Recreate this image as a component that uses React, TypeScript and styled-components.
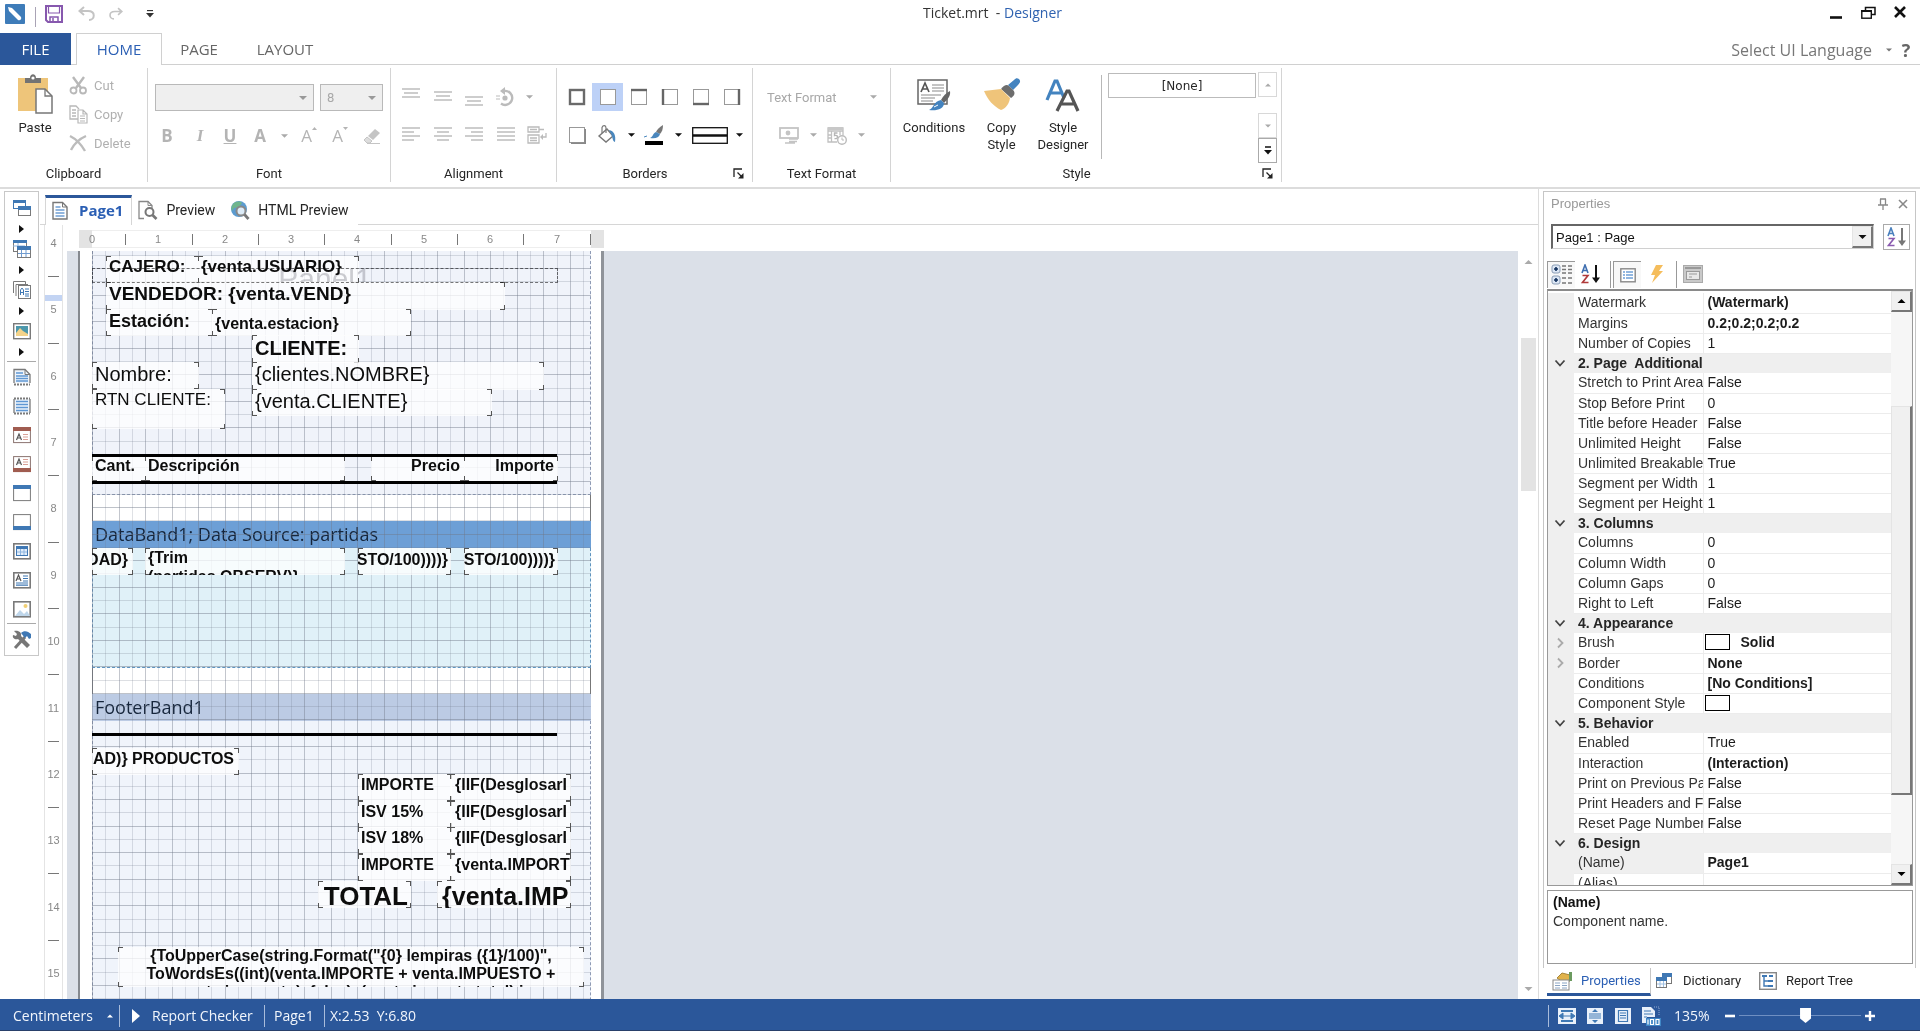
import React from "react";
import styled, { createGlobalStyle, css } from "styled-components";

const UI = `Roboto, "Open Sans", sans-serif`;
const SEGOE = `"Open Sans", "Noto Sans", sans-serif`;
const ARIAL = `"Liberation Sans", Arial, sans-serif`;
const BLUE = "#2b579a";

const Global = createGlobalStyle`
  * { box-sizing: border-box; }
  html, body { margin: 0; padding: 0; background: #fff; }
  body { font-family: ${UI}; font-size: 13px; color: #262626; overflow: hidden; }
  button, input, select { font: inherit; color: inherit; margin: 0; }
  h1, h2, p { margin: 0; font-weight: 400; }
`;

/* ---------- shell ---------- */
const App_ = styled.div`
  display: flex;
  flex-direction: column;
  height: 100vh;
`;
const PlainButton = styled.button`
  display: inline-flex;
  align-items: center;
  justify-content: center;
  border: 0;
  padding: 0;
  background: transparent;
`;

/* ---------- title bar ---------- */
const TitleBar = styled.header`
  display: grid;
  grid-template-columns: 1fr auto 1fr;
  height: 33px;
  padding: 0 4px 0 5px;
  font-family: ${SEGOE};
  font-size: 14px;
`;
const QuickAccess = styled.div`
  display: flex;
  align-items: center;
  height: 28px;
`;
const QuickRule = styled.span`
  width: 1px;
  height: 20px;
  margin: 6px 9px 0 10px;
  background: #a9a3b5;
`;
const QuickButton = styled(PlainButton)<{ $w: number }>`
  width: ${(p) => p.$w}px;
  height: 24px;
`;
const WindowTitle = styled.h1`
  padding-left: 64px;
  font-size: 14px;
  line-height: 25px;
  white-space: pre;
  color: #333;
  span { color: #2f62b0; }
`;
const WindowButtons = styled.div`
  display: flex;
  justify-content: flex-end;
  height: 24px;
`;
const WindowButton = styled(PlainButton)`
  width: 32px;
  height: 24px;
`;

/* ---------- ribbon tabs ---------- */
const TabRow = styled.nav`
  display: flex;
  height: 32px;
  border-bottom: 1px solid #d0d0d0;
  font-family: ${SEGOE};
  font-size: 15px;
`;
const FileTab = styled(PlainButton)`
  width: 71px;
  height: 32px;
  margin-right: 5px;
  background: ${BLUE};
  color: #fff;
`;
const RibbonTab = styled(PlainButton)<{ $on?: boolean; $w: number }>`
  width: ${(p) => p.$w}px;
  height: 32px;
  padding-bottom: 2px;
  color: ${(p) => (p.$on ? "#2b5fb4" : "#666")};
  border: 1px solid ${(p) => (p.$on ? "#d0d0d0" : "transparent")};
  border-bottom: 0;
  background: ${(p) => (p.$on ? "#fff" : "transparent")};
`;
const Language = styled(PlainButton)`
  margin-left: auto;
  gap: 14px;
  padding-bottom: 2px;
  font-size: 16px;
  color: #777;
  height: 35px;
`;
const Help = styled(PlainButton)`
  width: 28px;
  height: 35px;
  padding: 0 0 2px 0;
  font: 700 18px ${SEGOE};
  color: #666;
`;

/* ---------- ribbon ---------- */
const Ribbon = styled.section`
  display: flex;
  flex: none;
  height: 124px;
  padding-top: 3px;
  border-bottom: 2px solid #dcdcdc;
`;
const GroupBox = styled.div<{ $w: number }>`
  display: flex;
  flex-direction: column;
  width: ${(p) => p.$w}px;
  height: 114px;
  border-right: 1px solid #d4d4d4;
`;
const GroupBody = styled.div<{ $pad?: string; $row?: boolean }>`
  display: flex;
  flex-direction: ${(p) => (p.$row ? "row" : "column")};
  height: 97px;
  padding: ${(p) => p.$pad || "0"};
`;
const GroupFoot = styled.div<{ $launch?: boolean }>`
  display: grid;
  grid-template-columns: ${(p) => (p.$launch ? "2px 1fr 21px" : "1fr")};
  height: 17px;
  line-height: 17px;
  text-align: center;
`;
const Launcher = styled(PlainButton)`
  width: 14px;
  height: 16px;
`;
const Strip = styled.div<{ $h: number; $left?: number }>`
  display: flex;
  align-items: center;
  height: ${(p) => p.$h}px;
  padding-left: ${(p) => p.$left || 0}px;
`;
const IconButton = styled(PlainButton)<{ $w: number; $on?: boolean; $dim?: boolean }>`
  width: ${(p) => p.$w}px;
  height: 28px;
  flex: none;
  color: ${(p) => (p.$dim ? "#b4b4b4" : "#111")};
  background: ${(p) => (p.$on ? "#bdd1f7" : "transparent")};
`;
const Glyph = styled.span<{ $b?: boolean; $i?: boolean; $u?: boolean }>`
  font-family: ${SEGOE};
  font-size: 17px;
  line-height: 22px;
  font-weight: ${(p) => (p.$b ? 700 : 400)};
  font-style: ${(p) => (p.$i ? "italic" : "normal")};
  text-decoration: ${(p) => (p.$u ? "underline" : "none")};
  ${(p) => p.$i && `font-family: "Liberation Serif", serif; font-weight: 700;`}
`;
const BigButton = styled(PlainButton)<{ $w: number; $top: number }>`
  flex-direction: column;
  justify-content: flex-start;
  width: ${(p) => p.$w}px;
  height: 94px;
  padding-top: ${(p) => p.$top}px;
  line-height: 17px;
  svg { flex: none; margin-bottom: 5px; }
`;
const ClipColumn = styled.div`
  display: flex;
  flex-direction: column;
  padding-left: 13px;
`;
const ClipButton = styled(PlainButton)`
  justify-content: flex-start;
  gap: 6px;
  height: 29px;
  color: #b0b0b0;
`;
const SelectBox = styled.label<{ $w: number }>`
  display: flex;
  align-items: center;
  width: ${(p) => p.$w}px;
  height: 27px;
  margin-right: 6px;
  padding-right: 6px;
  border: 1px solid #b9b9b9;
  background: #efefef;
  color: #a8a8a8;
  select {
    flex: 1;
    min-width: 0;
    height: 100%;
    padding: 0 6px;
    border: 0;
    background: transparent;
    appearance: none;
    color: #a8a8a8;
    opacity: 1;
  }
`;
const FormatSelect = styled(SelectBox)`
  border-color: transparent;
  background: transparent;
`;
const StyleRule = styled.span`
  width: 1px;
  height: 84px;
  margin: 7px 6px 0 1px;
  background: #b8b8b8;
`;
const StyleList = styled.div`
  width: 148px;
  padding-top: 5px;
`;
const StyleItem = styled(PlainButton)`
  width: 148px;
  height: 25px;
  border: 1px solid #bbb;
  font-family: "DejaVu Sans", sans-serif;
  font-size: 12px;
`;
const StyleScroll = styled.div`
  display: flex;
  flex-direction: column;
  width: 19px;
  height: 95px;
  padding-top: 4px;
  margin-left: 2px;
`;
const StyleStep = styled(PlainButton)<{ $dark?: boolean; $push?: boolean }>`
  height: 25px;
  margin-top: ${(p) => (p.$push ? "auto" : "0")};
  border: 1px solid ${(p) => (p.$dark ? "#aaa" : "#d8d8d8")};
`;

/* ---------- workspace ---------- */
const Work = styled.main`
  display: flex;
  flex: 1;
  min-height: 0;
`;
const ToolBox = styled.aside`
  display: flex;
  flex-direction: column;
  align-self: flex-start;
  align-items: center;
  width: 35px;
  height: 465px;
  margin: 2px 1px 0 4px;
  padding-top: 5px;
  border: 1px solid #c8c8c8;
`;
const ToolButton = styled(PlainButton)<{ $h: number }>`
  width: 30px;
  height: ${(p) => p.$h}px;
  flex: none;
`;
const ToolRule = styled.span`
  width: 29px;
  height: 1px;
  flex: none;
  background: #aaa;
`;
const Document = styled.section`
  display: flex;
  flex-direction: column;
  flex: 1;
  min-width: 0;
  margin-right: 4px;
  border-right: 1px solid #dcdcdc;
`;
const DocTabs = styled.div`
  display: flex;
  flex: none;
  height: 36px;
  padding: 6px 0 0 5px;
  border-bottom: 1px solid #d6d6d6;
`;
const DocTab = styled(PlainButton)<{ $on?: boolean; $gap: number }>`
  height: 30px;
  padding: ${(p) => (p.$on ? "0 8px 3px 6px" : "2px 9px 3px 6px")};
  gap: ${(p) => p.$gap}px;
  font: ${(p) => (p.$on ? `700 15px ${SEGOE}` : `400 14px ${UI}`)};
  color: ${(p) => (p.$on ? "#2b5fb4" : "#262626")};
  background: #fff;
  ${(p) => p.$on && `border-top: 3px solid ${BLUE}; border-right: 1px solid #d6d6d6; border-left: 1px solid #d6d6d6;`}
`;
const Surface = styled.div`
  display: flex;
  flex: 1;
  min-height: 0;
`;
const VRuler = styled.div`
  position: relative;
  width: 19px;
  margin: 0 4px 0 4px;
  border-left: 1px solid #e4e4e4;
  border-right: 1px solid #e4e4e4;
  overflow: hidden;
`;
const VMark = styled.span<{ $y: number }>`
  position: absolute;
  top: ${(p) => p.$y - 8}px;
  left: 0;
  width: 17px;
  text-align: center;
  font: 11px/14px ${ARIAL};
  color: #888;
`;
const VTick = styled.span<{ $y: number }>`
  position: absolute;
  top: ${(p) => p.$y - 1}px;
  left: 3px;
  width: 11px;
  height: 1px;
  background: #777;
`;
const VCursor = styled.span`
  position: absolute;
  top: 70px;
  left: 0;
  width: 17px;
  height: 6px;
  background: #c3d4f3;
`;
const Stage = styled.div`
  display: flex;
  flex-direction: column;
  flex: 1;
  min-width: 0;
`;
const HRuler = styled.div`
  position: relative;
  flex: none;
  height: 18px;
  width: 525px;
  margin: 5px 0 3px 12px;
  border: 0 solid #e3e3e3;
  border-width: 0 13px;
  box-shadow: inset 0 1px #eee, inset 0 -1px #eee;
`;
const HMark = styled.span<{ $x: number }>`
  position: absolute;
  left: ${(p) => p.$x - 10}px;
  top: 2px;
  width: 20px;
  text-align: center;
  font: 11px/14px ${ARIAL};
  color: #888;
`;
const HTick = styled.span<{ $x: number }>`
  position: absolute;
  left: ${(p) => p.$x}px;
  top: 4px;
  width: 1px;
  height: 11px;
  background: #777;
`;
const Canvas = styled.div`
  flex: 1;
  min-height: 0;
  overflow: hidden;
  background: #dbe0e8;
`;
const Sheet = styled.div`
  width: 526px;
  height: 1200px;
  margin-left: 11px;
  padding-left: 12px;
  border-left: 2px solid #85898f;
  border-right: 3px solid #8f9399;
  background: #fff;
`;
const Bands = styled.div`
  position: relative;
  width: 499px;
`;
const BandBody = styled.div<{ $h: number; $bg: string; $line: string }>`
  height: ${(p) => p.$h}px;
  background: ${(p) => p.$bg};
  border: 1px dashed ${(p) => p.$line};
  border-top: 0;
`;
const BandTitle = styled.h2<{ $bg: string }>`
  height: 27px;
  padding-left: 3px;
  font: 18px/26px ${SEGOE};
  color: #16263c;
  background: ${(p) => p.$bg};
`;
const BandGap = styled.div`
  height: 26px;
  border: solid #777;
  border-width: 0 1px;
`;
const GridLayer = styled.svg`
  position: absolute;
  inset: 0;
  pointer-events: none;
`;
const corners = css`
  --c: linear-gradient(#555, #555);
  background-image: var(--c), var(--c), var(--c), var(--c), var(--c), var(--c), var(--c), var(--c);
  background-repeat: no-repeat;
  background-size: 5px 1px, 1px 5px, 5px 1px, 1px 5px, 5px 1px, 1px 5px, 5px 1px, 1px 5px;
  background-position: 0 0, 0 0, 100% 0, 100% 0, 0 100%, 0 100%, 100% 100%, 100% 100%;
`;
type FieldProps = { $x: number; $y: number; $w: number; $h: number; $s: number; $b?: boolean; $a?: string; $t?: number; $side: number };
const Field = styled.div<FieldProps>`
  position: absolute;
  left: ${(p) => p.$x}px;
  top: ${(p) => p.$y}px;
  width: ${(p) => p.$w}px;
  height: ${(p) => p.$h}px;
  padding: ${(p) => p.$t ?? 0}px ${(p) => p.$side}px 0;
  display: flex;
  justify-content: ${(p) => p.$a || "flex-start"};
  overflow: hidden;
  white-space: pre;
  text-align: ${(p) => (p.$a === "center" ? "center" : "left")};
  font-family: ${ARIAL};
  font-size: ${(p) => p.$s}px;
  line-height: ${(p) => (p.$s > 17 ? 24 : p.$a === "center" ? 18 : 19)}px;
  font-weight: ${(p) => (p.$b ? 700 : 400)};
  color: #0d0d0d;
  background-color: rgba(255, 255, 255, 0.75);
  ${corners}
`;
const Rule = styled.div<{ $y: number }>`
  position: absolute;
  left: 0;
  top: ${(p) => p.$y}px;
  width: 465px;
  height: 3px;
  background: #000;
`;
const Panel = styled.div`
  position: absolute;
  left: 0;
  top: 17px;
  width: 466px;
  height: 15px;
  overflow: hidden;
  border: 1px dashed #777;
  mix-blend-mode: multiply;
  font: 30px/20px ${ARIAL};
  text-align: center;
  color: #cfcfd2;
`;
const ScrollTrack = styled.div`
  display: flex;
  flex-direction: column;
  align-items: center;
  width: 20px;
  padding: 35px 0 8px;
`;
const ScrollThumb = styled.div`
  width: 15px;
  height: 153px;
  margin: 74px 0 auto;
  background: #e3e3e3;
`;

/* ---------- properties ---------- */
const Side = styled.aside`
  display: flex;
  flex-direction: column;
  width: 373px;
  margin: 2px 4px 0 0;
`;
const SideFrame = styled.div`
  display: flex;
  flex-direction: column;
  flex: 1;
  min-height: 0;
  padding: 0 2px 4px 3px;
  border: 1px solid #c6c6c6;
  border-bottom: 0;
  font-family: ${ARIAL};
`;
const SideHead = styled.div`
  display: flex;
  align-items: center;
  height: 23px;
  padding: 0 0 0 4px;
  color: #999;
  h2 { flex: 1; font-size: 13px; }
`;
const HeadButton = styled(PlainButton)`
  width: 20px;
  height: 22px;
`;
const PickRow = styled.div`
  display: flex;
  justify-content: space-between;
  margin: 9px 3px 0 4px;
`;
const PickBox = styled.label`
  display: flex;
  width: 323px;
  height: 25px;
  border: 1px solid #d0d0d0;
  border-top: 2px solid #666;
  border-left: 2px solid #666;
  select {
    flex: 1;
    border: 0;
    padding: 0 3px;
    background: #fff;
    appearance: none;
    color: #111;
  }
`;
const bevel = css`
  border: 1px solid #e4e4e4;
  border-right: 2px solid #777;
  border-bottom: 2px solid #777;
  background: #f0f0f0;
`;
const PickArrow = styled.span`
  display: flex;
  align-items: center;
  justify-content: center;
  width: 21px;
  ${bevel}
`;
const SortButton = styled(PlainButton)`
  width: 27px;
  height: 26px;
  border: 1px solid #aaa;
`;
const GridTools = styled.div`
  display: flex;
  align-items: center;
  height: 30px;
  margin: 9px 0 0 0;
`;
const GridTool = styled(PlainButton)<{ $on?: boolean }>`
  width: 28px;
  height: 27px;
  margin-right: 2px;
  ${(p) => p.$on && `border-top: 1px solid #999; border-left: 1px solid #999; background: #f8f8f8;`}
`;
const GridToolRule = styled.span`
  width: 1px;
  height: 27px;
  margin: 0 2px 0 3px;
  background: #999;
`;
const GridFrame = styled.div`
  display: flex;
  flex: 1;
  min-height: 0;
  overflow: hidden;
  border: 1px solid #999;
  border-top: 2px solid #8a8a8a;
`;
const GridView = styled.div`
  flex: 1;
  height: 100%;
  padding-top: 2px;
  overflow: hidden;
`;
const PropTable = styled.table`
  width: 100%;
  table-layout: fixed;
  border-collapse: collapse;
  font-size: 14px;
  td, th {
    height: 20px;
    padding: 0;
    line-height: 19px;
    white-space: pre;
    overflow: hidden;
    text-align: left;
    font-weight: 400;
  }
`;
const Gutter = styled.td`
  background: #efefef;
  svg { display: block; margin: 0 0 0 6px; }
`;
const NameCell = styled.th<{ $sel?: boolean }>`
  && { padding-left: 4px; }
  color: #333;
  border-bottom: 1px solid #ececec;
  border-right: 1px solid #ececec;
  background: ${(p) => (p.$sel ? "#efefef" : "#fff")};
`;
const ValueCell = styled.td<{ $b?: boolean }>`
  && { padding-left: 4px; font-weight: ${(p) => (p.$b ? 700 : 400)}; }
  color: #1c1c1c;
  border-bottom: 1px solid #ececec;
`;
const SectionCell = styled.th`
  && { padding-left: 4px; font-weight: 700; }
  background: #efefef;
`;
const Swatch = styled.span`
  display: inline-block;
  width: 25px;
  height: 16px;
  margin: 1px 11px 0 -3px;
  vertical-align: top;
  border: 1px solid #000;
  background: #fff;
`;
const GridScroll = styled.div`
  display: flex;
  flex-direction: column;
  width: 21px;
  background: #f6f6f6;
`;
const BevelButton = styled(PlainButton)`
  height: 21px;
  flex: none;
  ${bevel}
`;
const BevelThumb = styled.div`
  height: 389px;
  margin: 94px 0 auto;
  flex: none;
  ${bevel}
`;
const HelpBox = styled.div`
  height: 74px;
  margin-top: 4px;
  padding: 2px 5px;
  border: 1px solid #999;
  font-size: 14px;
  line-height: 19px;
  color: #333;
  b { color: #111; }
`;
const SideTabs = styled.div`
  display: flex;
  height: 31px;
  padding: 0 0 3px 4px;
`;
const SideTab = styled(PlainButton)<{ $on?: boolean; $w: number }>`
  width: ${(p) => p.$w}px;
  height: 28px;
  padding-left: 5px;
  gap: 9px;
  justify-content: flex-start;
  color: ${(p) => (p.$on ? "#2b5fb4" : "#262626")};
  border-bottom: 3px solid ${(p) => (p.$on ? BLUE : "transparent")};
  border-right: 1px solid ${(p) => (p.$on ? "#c6c6c6" : "transparent")};
`;

/* ---------- status bar ---------- */
const Status = styled.footer`
  display: flex;
  align-items: center;
  flex: none;
  height: 32px;
  padding: 2px 0 0 13px;
  background: ${BLUE};
  border-bottom: 1px solid #29406a;
  color: #f2f6fc;
  font: 14px ${SEGOE};
`;
const StatusButton = styled(PlainButton)<{ $w: number; $gap?: number }>`
  width: ${(p) => p.$w}px;
  height: 28px;
  gap: ${(p) => p.$gap || 0}px;
  justify-content: flex-start;
`;
const StatusText = styled.span<{ $w: number }>`
  width: ${(p) => p.$w}px;
  white-space: pre;
`;
const StatusRule = styled.span<{ $gap: number }>`
  width: 1px;
  height: 22px;
  margin-right: ${(p) => p.$gap}px;
  background: #a9bcdb;
`;
const ZoomArea = styled.div`
  display: flex;
  align-items: center;
  width: 372px;
  margin-left: auto;
`;
const ZoomSlider = styled.input`
  width: 122px;
  height: 18px;
  margin: 0 3px;
  appearance: none;
  background: linear-gradient(#6f8fc2, #6f8fc2) center / 100% 1px no-repeat;
  &::-webkit-slider-thumb {
    appearance: none;
    width: 11px;
    height: 15px;
    border-radius: 0;
    background: #fff;
    clip-path: polygon(0 0, 100% 0, 100% 70%, 50% 100%, 0 70%);
  }
`;

/* ---------- icons ---------- */
const Svg = ({ w = 18, h = 18, vb, children }: { w?: number; h?: number; vb?: string; children: React.ReactNode }) => (
  <svg width={w} height={h} viewBox={vb || `0 0 ${w} ${h}`} fill="none" aria-hidden="true">{children}</svg>
);
const Down = ({ c = "#111", w = 7 }: { c?: string; w?: number }) => (
  <Svg w={w} h={4} vb="0 0 8 4"><path d="M0 0h8l-4 4z" fill={c} /></Svg>
);
const Up = ({ c = "#fff", w = 7 }: { c?: string; w?: number }) => (
  <Svg w={w} h={4} vb="0 0 8 4"><path d="M0 4h8l-4-4z" fill={c} /></Svg>
);
const Right = () => <Svg w={5} h={8}><path d="M0 0v8l5-4z" fill="#111" /></Svg>;
const LauncherIcon = () => (
  <Svg w={11} h={11}><path d="M1 9V1h8M4.500 4.500l4 4" stroke="#222" strokeWidth="1.300" /><path d="M10.500 5v5.500H5z" fill="#222" /></Svg>
);
const Lines = ({ rows }: { rows: number[][] }) => (
  <Svg><g stroke="#bdbdbd" strokeWidth="1.500">{rows.map(([x, y, w], i) => <path key={i} d={`M${x} ${y}h${w}`} />)}</g></Svg>
);
const Edge = ({ side }: { side?: string }) => (
  <Svg w={18} h={18}>
    <rect x={side === "all" ? 2 : 1.5} y={side === "all" ? 2 : 1.5} width={side === "all" ? 14 : 15} height={side === "all" ? 14 : 15} fill="#fff" stroke={side === "all" ? "#6a6a6a" : "#999"} strokeWidth={side === "all" ? 2.4 : 1} />
    {side === "t" && <path d="M1 2h16" stroke="#666" strokeWidth="2.400" />}
    {side === "b" && <path d="M1 16h16" stroke="#666" strokeWidth="2.400" />}
    {side === "l" && <path d="M2 1v16" stroke="#666" strokeWidth="2.400" />}
    {side === "r" && <path d="M16 1v16" stroke="#666" strokeWidth="2.400" />}
    {side === "s" && <path d="M3 17.200h14.200V3" stroke="#888" strokeWidth="1.600" />}
  </Svg>
);
const AZ = ({ z = "#8a5bb0", a = "#4a80bd", arrow = "#777" }) => (
  <Svg w={20} h={20}>
    <path d="M1 9L4 1l3 8M2 6.500h4" stroke={a} strokeWidth="1.600" />
    <path d="M1.500 11.500h5.500l-5.500 7h6" stroke={z} strokeWidth="1.600" />
    <path d="M15 1v14" stroke={arrow} strokeWidth="2" /><path d="M11 13.500h8L15 19z" fill={arrow} />
  </Svg>
);
const Chevron = ({ open }: { open?: boolean }) => (
  <Svg w={12} h={12}>
    {open ? <path d="M1.500 3.500L6 8.500l4.500-5" stroke="#444" strokeWidth="1.800" /> : <path d="M4 1.500L8.500 6 4 10.500" stroke="#aaa" strokeWidth="1.800" />}
  </Svg>
);
const G = "#7a7a7a";
const B = "#3f78b4";
const tools = [
  <Svg><rect x=".5" y="1.500" width="12" height="8" fill="#fff" stroke={B} /><path d="M0 1h13v3H0z" fill={B} /><rect x="5.500" y="8.500" width="12" height="8" fill="#fff" stroke={G} /><path d="M5 7h13v4H5z" fill={B} /></Svg>,
  <Svg><rect x=".5" y="1.500" width="13" height="10" fill="#fff" stroke={G} /><path d="M0 0h14v3H0z" fill={B} /><path d="M5 3v8M0 6h12" stroke="#8fb3dc" /><rect x="4.500" y="7.500" width="13" height="10" fill="#fff" stroke={G} /><path d="M4 6h14v4H4z" fill={B} /><path d="M8.500 10v7M13 10v7M5 13.500h12" stroke="#6f9bd0" /></Svg>,
  <Svg><path d="M.5 12V.5h12V3M3 15V3.500h12" stroke={G} /><rect x="5.500" y="4.500" width="12" height="13" fill="#fff" stroke={G} /><path d="M7.500 14V9l1.500-2 1.500 2v5M7.500 11.500h3M12 8h4M12 10.500h4M12 13h4M12 15h4" stroke={B} /></Svg>,
  <Svg><rect x=".7" y="1.700" width="16.600" height="15" fill="#fff" stroke={G} strokeWidth="1.400" /><path d="M3 4h12v10H3z" fill="#4c97ab" /><path d="M3 14v-3l4-5 3 3 5 3v2z" fill="#f3d38a" /></Svg>,
];
const bands = [
  <Svg><path d="M1 15V1.500h11l5 5V15" fill="#eef4fb" stroke={G} strokeWidth="1.300" /><path d="M12 1.500v5h5" stroke={G} /><path d="M3 5h7M3 8h12M3 10.500h12M3 13h12" stroke="#5f97d3" strokeWidth="1.500" /><path d="M1 16.500h16" stroke={G} strokeWidth="2" strokeDasharray="2 1" /></Svg>,
  <Svg><rect x="1" y="2" width="16" height="14" fill="#eef4fb" /><path d="M1 2v14M17 2v14" stroke={G} strokeWidth="1.300" /><path d="M3 4.500h12M3 7.500h12M3 10.500h12M3 13.500h12" stroke="#5f97d3" strokeWidth="1.600" /><path d="M1 1.500h16M1 16.500h16" stroke={G} strokeWidth="2" strokeDasharray="2 1" /></Svg>,
  <Svg><rect x=".6" y="1.600" width="16.800" height="15" fill="#fff" stroke="#8b7470" /><path d="M0 1h18v4H0z" fill="#a05c50" /><path d="M3.500 14l2.500-6 2.500 6M4.500 12h3" stroke="#555" strokeWidth="1.200" /><path d="M10 8.500h5M10 11h5M10 13.500h5" stroke="#d9a096" /></Svg>,
  <Svg><rect x=".6" y="1.600" width="16.800" height="15" fill="#fff" stroke="#8b7470" /><path d="M0 13h18v4H0z" fill="#a05c50" /><path d="M3.500 10L6 4l2.500 6M4.500 8h3" stroke="#555" strokeWidth="1.200" /><path d="M10 4.500h5M10 7h5M10 9.500h5" stroke="#d9a096" /></Svg>,
  <Svg><rect x=".6" y="1.600" width="16.800" height="15" fill="#fff" stroke={G} /><path d="M0 1h18v4H0z" fill={B} /></Svg>,
  <Svg><rect x=".6" y="1.600" width="16.800" height="15" fill="#fff" stroke={G} /><path d="M0 13h18v4H0z" fill={B} /></Svg>,
  <Svg><rect x=".8" y="1.800" width="16.400" height="15" fill="#fff" stroke={G} strokeWidth="1.600" /><rect x="3.500" y="4.500" width="11" height="9" fill="#e3eefa" stroke={B} /><path d="M3 4h12v3H3z" fill={B} /><path d="M7.500 7v6M11 7v6M4 10h10" stroke="#8fb6e0" /></Svg>,
  <Svg><rect x=".8" y="1.800" width="16.400" height="15" fill="#fff" stroke={G} strokeWidth="1.600" /><path d="M3 10l2.500-6L8 10M4 8h3" stroke="#555" strokeWidth="1.200" /><path d="M10 5h5M10 7.500h5M10 10h5M3 12h12M3 14.200h12" stroke={B} strokeWidth="1.200" /></Svg>,
  <Svg><rect x=".8" y="1.800" width="16.400" height="15" fill="#fff" stroke={G} strokeWidth="1.600" /><circle cx="12.500" cy="6" r="2" fill="#f1cf74" /><path d="M2 16l5-6 4 4 3-3 3 5z" fill="#bfd6ea" /></Svg>,
];
const bandNames = ["Report Title", "Report Summary", "Page Header", "Page Footer", "Header", "Footer", "Data", "Text", "Image"];
const toolNames = ["Bands", "Cross Bands", "Components", "Images"];

const PaperIcon = () => (
  <Svg w={16} h={19}><path d="M1 1.500h9.500L15 6v12H1z" fill="#fff" stroke="#777" strokeWidth="1.400" /><path d="M10.500 1.500V6H15" stroke="#777" /><path d="M3.500 6h5M3.500 9h9M3.500 12h9M3.500 15h9" stroke="#6f9fd3" strokeWidth="1.300" /></Svg>
);
const PreviewIcon = () => (
  <Svg w={20} h={20}><path d="M6 18.500H1v-17h9l4 4v3" stroke="#888" strokeWidth="1.300" /><path d="M10 1.500v4h4" stroke="#888" /><circle cx="11.500" cy="12" r="4" fill="#fff" stroke="#777" strokeWidth="2" /><path d="M14.500 15l4 4" stroke="#777" strokeWidth="2.600" /></Svg>
);
const GlobeIcon = () => (
  <Svg w={20} h={20}><circle cx="9" cy="9" r="8" fill="#5b9bd0" /><path d="M3 4c3-3 7-3 9-1l-3 4-5 1-2 3c-1-2-1-5 1-7z" fill="#6fb58d" /><circle cx="11" cy="11" r="4.500" fill="#dcebf7" stroke="#888" strokeWidth="2" /><path d="M14.500 14.500l4 4.500" stroke="#777" strokeWidth="2.800" /></Svg>
);

/* ---------- report data ---------- */
const CM = 66.36;
const at = (cm: number) => Math.round(cm * CM);

const fields: { t: string; x: number; y: number; w: number; h?: number; s?: number; b?: boolean; a?: string; p?: number; side?: number }[] = [
  { t: "CAJERO:", x: 14, y: 5, w: 93, s: 17, b: true, p: 1 },
  { t: "{venta.USUARIO}", x: 106, y: 5, w: 161, s: 17, b: true, p: 1 },
  { t: "VENDEDOR: {venta.VEND}", x: 14, y: 31, w: 399, h: 28, s: 19, b: true, p: 0 },
  { t: "Estación:", x: 14, y: 58, w: 107, s: 18, b: true, p: 0 },
  { t: "{venta.estacion}", x: 120, y: 58, w: 199, s: 16, b: true, p: 5 },
  { t: "CLIENTE:", x: 160, y: 84, w: 107, h: 28, s: 20, b: true, p: 1 },
  { t: "Nombre:", x: 0, y: 111, w: 107, s: 20, p: 0 },
  { t: "{clientes.NOMBRE}", x: 160, y: 111, w: 292, h: 28, s: 20, p: 0 },
  { t: "RTN CLIENTE:", x: 0, y: 138, w: 133, h: 40, s: 17, p: 1 },
  { t: "{venta.CLIENTE}", x: 160, y: 138, w: 240, s: 20, p: 0 },
  { t: "Cant.", x: 0, y: 205, w: 54, h: 25, s: 16, b: true, p: 0 },
  { t: "Descripción", x: 53, y: 205, w: 200, h: 25, s: 16, b: true, p: 0 },
  { t: "Precio", x: 279, y: 205, w: 94, h: 25, s: 16, b: true, a: "flex-end", p: 0, side: 5 },
  { t: "Importe", x: 372, y: 205, w: 94, h: 25, s: 16, b: true, a: "flex-end", p: 0, side: 4 },
  { t: "DAD}", x: 0, y: 297, w: 41, s: 16, b: true, a: "flex-end", p: 2, side: 5 },
  { t: "{Trim\n(partidas.OBSERV)}", x: 53, y: 297, w: 200, s: 16, b: true, p: 0 },
  { t: "STO/100))))}", x: 266, y: 297, w: 93, s: 16, b: true, a: "flex-end", p: 2 },
  { t: "STO/100))))}", x: 372, y: 297, w: 94, s: 16, b: true, a: "flex-end", p: 2 },
  { t: "AD)} PRODUCTOS", x: 0, y: 497, w: 147, s: 16, b: true, a: "flex-end", p: 1, side: 5 },
  { t: "IMPORTE", x: 266, y: 523, w: 94, s: 16, b: true, p: 1 },
  { t: "{IIF(DesglosarI", x: 358, y: 523, w: 121, s: 16, b: true, p: 1, side: 5 },
  { t: "ISV 15%", x: 266, y: 550, w: 94, s: 16, b: true, p: 1 },
  { t: "{IIF(DesglosarI", x: 358, y: 550, w: 121, s: 16, b: true, p: 1, side: 5 },
  { t: "ISV 18%", x: 266, y: 576, w: 94, s: 16, b: true, p: 1 },
  { t: "{IIF(DesglosarI", x: 358, y: 576, w: 121, s: 16, b: true, p: 1, side: 5 },
  { t: "IMPORTE", x: 266, y: 603, w: 94, s: 16, b: true, p: 1 },
  { t: "{venta.IMPORT", x: 358, y: 603, w: 121, s: 16, b: true, p: 1, side: 5 },
  { t: "TOTAL", x: 226, y: 630, w: 93, s: 26, b: true, a: "flex-end", p: 3 },
  { t: "{venta.IMP", x: 345, y: 630, w: 134, s: 25, b: true, p: 3, side: 5 },
  {
    t: "{ToUpperCase(string.Format(\"{0} lempiras ({1}/100)\",\nToWordsEs((int)(venta.IMPORTE + venta.IMPUESTO +\nventa.impuesto), false), (venta.importe.total).i",
    x: 26, y: 696, w: 466, h: 40, s: 16, b: true, a: "center", p: 0,
  },
];

type Row = [string, string?, (string | boolean)?, string?];
const rows: Row[] = [
  ["Watermark", "(Watermark)", true],
  ["Margins", "0.2;0.2;0.2;0.2", true],
  ["Number of Copies", "1"],
  ["2. Page  Additional"],
  ["Stretch to Print Area", "False"],
  ["Stop Before Print", "0"],
  ["Title before Header", "False"],
  ["Unlimited Height", "False"],
  ["Unlimited Breakable", "True"],
  ["Segment per Width", "1"],
  ["Segment per Height", "1"],
  ["3. Columns"],
  ["Columns", "0"],
  ["Column Width", "0"],
  ["Column Gaps", "0"],
  ["Right to Left", "False"],
  ["4. Appearance"],
  ["Brush", "Solid", true, "swatch more"],
  ["Border", "None", true, "more"],
  ["Conditions", "[No Conditions]", true],
  ["Component Style", "", false, "swatch"],
  ["5. Behavior"],
  ["Enabled", "True"],
  ["Interaction", "(Interaction)", true],
  ["Print on Previous Page", "False"],
  ["Print Headers and Footers", "False"],
  ["Reset Page Number", "False"],
  ["6. Design"],
  ["(Name)", "Page1", true, "sel"],
  ["(Alias)", ""],
];

const Group = ({ w, label, launch, pad, row, children }: { w: number; label: string; launch?: boolean; pad?: string; row?: boolean; children: React.ReactNode }) => (
  <GroupBox $w={w}>
    <GroupBody $pad={pad} $row={row}>{children}</GroupBody>
    <GroupFoot $launch={launch}>
      {launch && <span />}
      <span>{label}</span>
      {launch && <Launcher aria-label={`${label} settings`}><LauncherIcon /></Launcher>}
    </GroupFoot>
  </GroupBox>
);

const GridLines = () => {
  const v = Array.from({ length: 38 }, (_, k) => k);
  const h = Array.from({ length: 58 }, (_, k) => k - 4);
  return (
    <GridLayer width="499" height="760" shapeRendering="crispEdges">
      {v.map((k) => <path key={`v${k}`} d={`M${at(k / 5) + 0.5} 0V760`} stroke="#6f7888" strokeOpacity={k % 2 ? 0.22 : 0.42} />)}
      {h.map((k) => <path key={`h${k}`} d={`M0 ${57 + at(k / 5) + 0.5}H499`} stroke="#6f7888" strokeOpacity={k % 2 ? 0.45 : 0.24} />)}
    </GridLayer>
  );
};

export default function App() {
  return (
    <App_>
      <Global />
      <TitleBar>
        <QuickAccess>
          <Svg w={20} h={20}><rect width="20" height="20" rx="1" fill="#3e7cb9" /><path d="M3 3l4 1 9 9c1 2-1 4-3 3L4 7z" fill="#fff" /></Svg>
          <QuickRule />
          <QuickButton $w={18} aria-label="Save">
            <Svg><path d="M1 1h16v16H3l-2-2z" stroke="#8758ae" strokeWidth="2" /><path d="M3.500 2v6h11V2" stroke="#8758ae" strokeWidth="1.200" /><path d="M5 17v-5h8v5M8 13v3" stroke="#8758ae" strokeWidth="1.500" /></Svg>
          </QuickButton>
          <QuickButton $w={46} aria-label="Undo" disabled>
            <Svg w={17} h={16}><path d="M6 1L1.500 5 6 9M2 5h8c8 0 7 9 1 9" stroke="#c4c4c4" strokeWidth="2" /></Svg>
          </QuickButton>
          <QuickButton $w={14} aria-label="Redo" disabled>
            <Svg w={17} h={16}><path d="M11 1l4.500 4L11 9M15 5H7c-8 0-7 9-1 9" stroke="#c4c4c4" strokeWidth="2" /></Svg>
          </QuickButton>
          <QuickButton $w={54} aria-label="Customize toolbar">
            <Svg w={8} h={8}><path d="M1 .5h6" stroke="#333" strokeWidth="1.300" /><path d="M0 3h8L4 7.500z" fill="#333" /></Svg>
          </QuickButton>
        </QuickAccess>
        <WindowTitle>Ticket.mrt  - <span>Designer</span></WindowTitle>
        <WindowButtons>
          <WindowButton aria-label="Minimize"><Svg w={12} h={14}><path d="M0 12.500h12" stroke="#111" strokeWidth="2.600" /></Svg></WindowButton>
          <WindowButton aria-label="Restore"><Svg w={15} h={13}><path d="M4.500 4V1.500h9.500v7h-3M4 1.500h10" stroke="#111" strokeWidth="1.500" /><rect x=".8" y="5" width="9.500" height="7.200" stroke="#111" strokeWidth="1.400" fill="#fff" /><path d="M0 5h11" stroke="#111" strokeWidth="2" /></Svg></WindowButton>
          <WindowButton aria-label="Close"><Svg w={12} h={12}><path d="M1 1l10 10M11 1L1 11" stroke="#111" strokeWidth="2.600" /></Svg></WindowButton>
        </WindowButtons>
      </TitleBar>

      <TabRow>
        <FileTab>FILE</FileTab>
        <RibbonTab $on $w={86}>HOME</RibbonTab>
        <RibbonTab $w={74}>PAGE</RibbonTab>
        <RibbonTab $w={98}>LAYOUT</RibbonTab>
        <Language>Select UI Language <Down c="#777" w={6} /></Language>
        <Help>?</Help>
      </TabRow>

      <Ribbon>
        <Group w={148} label="Clipboard" row pad="3px 0 0 14px">
          <BigButton $w={42} $top={3}>
            <Svg w={36} h={40}>
              <path d="M1 4h30v33H1z" fill="#eec57a" /><path d="M8 9V4h5c0-5 6-5 6 0h5v5z" fill="#737373" /><circle cx="16" cy="4" r="1.600" fill="#fff" />
              <path d="M19 15h9l7 7v17H19z" fill="#fff" stroke="#777" strokeWidth="1.500" /><path d="M28 15v7h7" stroke="#777" strokeWidth="1.300" />
            </Svg>
            Paste
          </BigButton>
          <ClipColumn>
            <ClipButton disabled><Svg w={19} h={19}><path d="M4 1l8 11M15 1L7 12" stroke="#b8b8b8" strokeWidth="2.400" /><circle cx="4.500" cy="14.500" r="3" stroke="#b8b8b8" strokeWidth="1.800" /><circle cx="14" cy="14.500" r="3" stroke="#b8b8b8" strokeWidth="1.800" /></Svg>Cut</ClipButton>
            <ClipButton disabled><Svg w={19} h={19}><path d="M9 14H1V1h6l3 3M3 5h4M3 8h4M3 11h4" stroke="#b8b8b8" strokeWidth="1.300" /><path d="M9 5h5l4 4v9H9zM14 5v4h4M11 11h5M11 13.500h5M11 16h5" stroke="#b8b8b8" strokeWidth="1.200" fill="#fff" /></Svg>Copy</ClipButton>
            <ClipButton disabled><Svg w={19} h={19}><path d="M1 2c6 3 11 8 15 15M17 2C10 5 5 10 2 16" stroke="#bcbcbc" strokeWidth="2.400" /></Svg>Delete</ClipButton>
          </ClipColumn>
        </Group>

        <Group w={243} label="Font" pad="16px 0 0 0">
          <Strip $h={27} $left={7}>
            <SelectBox $w={159}><select aria-label="Font name" disabled><option> </option></select><Down c="#999" w={8} /></SelectBox>
            <SelectBox $w={63}><select aria-label="Font size" disabled><option>8</option></select><Down c="#999" w={8} /></SelectBox>
          </Strip>
          <Strip $h={50}>
            <IconButton $w={38} $dim aria-label="Bold"><Glyph $b>B</Glyph></IconButton>
            <IconButton $w={28} $dim aria-label="Italic"><Glyph $i>I</Glyph></IconButton>
            <IconButton $w={32} $dim aria-label="Underline"><Glyph $b $u>U</Glyph></IconButton>
            <IconButton $w={28} $dim aria-label="Font color"><Glyph $b>A</Glyph></IconButton>
            <IconButton $w={20} $dim aria-label="Font color list"><Down c="#aaa" /></IconButton>
            <IconButton $w={30} $dim aria-label="Grow font"><Glyph>A</Glyph><Svg w={5} h={18}><path d="M0 3l2.500-3L5 3z" fill="#b4b4b4" /></Svg></IconButton>
            <IconButton $w={32} $dim aria-label="Shrink font"><Glyph>A</Glyph><Svg w={5} h={18}><path d="M0 0l2.500 3L5 0z" fill="#b4b4b4" /></Svg></IconButton>
            <IconButton $w={32} $dim aria-label="Clear format"><Svg><path d="M5 9l7-7 5 4-7 7z" fill="#c4c4c4" /><path d="M4 10l5 4-2 2H4l-3-3z" fill="#ddd" stroke="#c4c4c4" /><path d="M4 16.500h13" stroke="#c4c4c4" /></Svg></IconButton>
          </Strip>
        </Group>

        <Group w={166} label="Alignment" pad="12px 0 0 4px">
          <Strip $h={34}>
            <IconButton $w={32} $dim aria-label="Align top"><Lines rows={[[0, 1, 18], [2, 5, 14], [0, 9, 18]]} /></IconButton>
            <IconButton $w={31} $dim aria-label="Align middle"><Lines rows={[[0, 4, 18], [2, 8, 14], [0, 12, 18]]} /></IconButton>
            <IconButton $w={32} $dim aria-label="Align bottom"><Lines rows={[[0, 9, 18], [2, 13, 14], [0, 17, 18]]} /></IconButton>
            <IconButton $w={30} $dim aria-label="Rotate text"><Svg w={18} h={20}><path d="M8 4a7 7 0 1 1-3 12.500" stroke="#bbb" strokeWidth="2.400" /><path d="M9 0v8L4 4z" fill="#bbb" /><circle cx="9" cy="11" r="2.600" fill="#bbb" /><path d="M0 9h4M0 12h4" stroke="#bbb" /></Svg></IconButton>
            <IconButton $w={18} $dim aria-label="Rotate list"><Down c="#aaa" /></IconButton>
          </Strip>
          <Strip $h={42}>
            <IconButton $w={32} $dim aria-label="Align left"><Lines rows={[[0, 2, 18], [0, 6, 12], [0, 10, 18], [0, 14, 12]]} /></IconButton>
            <IconButton $w={31} $dim aria-label="Align center"><Lines rows={[[0, 2, 18], [3, 6, 12], [0, 10, 18], [3, 14, 12]]} /></IconButton>
            <IconButton $w={32} $dim aria-label="Align right"><Lines rows={[[0, 2, 18], [6, 6, 12], [0, 10, 18], [6, 14, 12]]} /></IconButton>
            <IconButton $w={31} $dim aria-label="Justify"><Lines rows={[[0, 2, 18], [0, 6, 18], [0, 10, 18], [0, 14, 18]]} /></IconButton>
            <IconButton $w={31} $dim aria-label="Wrap text"><Svg w={20} h={20}><path d="M1 2h11v5H1zM3 4.500h7M12 4.500h5M1 10h11v8H1zM3 13h7M3 15.500h7M19 8v4h-5" stroke="#bbb" strokeWidth="1.300" /><path d="M16 9v6l-3-3z" fill="#bbb" /></Svg></IconButton>
          </Strip>
        </Group>

        <Group w={196} label="Borders" launch pad="12px 0 0 4px">
          <Strip $h={34}>
            {["all", "", "t", "l", "b", "r"].map((s) => <IconButton key={s} $w={31} $on={s === ""} aria-label={`Border ${s || "none"}`}><Edge side={s} /></IconButton>)}
          </Strip>
          <Strip $h={42}>
            <IconButton $w={31} aria-label="Shadow"><Edge side="s" /></IconButton>
            <IconButton $w={30} aria-label="Fill color"><Svg w={20} h={20}><path d="M2 11l8-7 6 7-7 6z" fill="#fff" stroke="#777" strokeWidth="1.400" /><path d="M5 8V2.500C6 0 9 0 9 3v5" stroke="#777" strokeWidth="1.200" /><path d="M12 5c5 1 7 5 6 12-3-1-2-5-4-8z" fill="#4a87bd" /></Svg></IconButton>
            <IconButton $w={18} aria-label="Fill list"><Down /></IconButton>
            <IconButton $w={28} aria-label="Line color"><Svg w={20} h={20}><path d="M19 0c0 4-1 7-3 9l-4-2c1-3 4-5 7-7z" fill="#777" /><path d="M12 7l4 2c-1 4-5 5-10 4 3-1 3-5 6-6z" fill="#4a87bd" /><path d="M0 12l3-1" stroke="#4a87bd" /><path d="M1 16h18v4H1z" fill="#000" /></Svg></IconButton>
            <IconButton $w={20} aria-label="Line color list"><Down /></IconButton>
            <IconButton $w={44} aria-label="Line style"><Svg w={36} h={17}><rect x=".7" y=".7" width="34.600" height="15.600" fill="#fff" stroke="#111" strokeWidth="1.300" /><path d="M1 8.500h34" stroke="#111" strokeWidth="2.400" /></Svg></IconButton>
            <IconButton $w={14} aria-label="Line style list"><Down /></IconButton>
          </Strip>
        </Group>

        <Group w={138} label="Text Format" pad="12px 0 0 7px">
          <Strip $h={34}>
            <FormatSelect $w={126}><select aria-label="Text format" disabled><option>Text Format</option></select><Down c="#aaa" /></FormatSelect>
          </Strip>
          <Strip $h={42} $left={14}>
            <IconButton $w={30} $dim aria-label="Currency"><Svg w={20} h={20}><rect x="1" y="3" width="18" height="10" stroke="#c4c4c4" strokeWidth="1.800" /><circle cx="9" cy="8" r="2.400" fill="#c4c4c4" /><path d="M10 14h9M10 16.500h8M6 18h10" stroke="#c4c4c4" strokeWidth="1.600" /></Svg></IconButton>
            <IconButton $w={18} $dim aria-label="Currency list"><Down c="#aaa" /></IconButton>
            <IconButton $w={30} $dim aria-label="Date"><Svg w={20} h={20}><path d="M10 17H1V3h15v7M1 6h15M4.500 6v11M1 10h4M1 13h4M13 6v4" stroke="#c0c0c0" strokeWidth="1.300" /><path d="M1 2h15v3H1z" fill="#c8c8c8" /><path d="M10.500 8H7.500v2.500c4-1 4 4 0 3" stroke="#b5b5b5" strokeWidth="1.400" /><circle cx="15" cy="15" r="4.300" fill="#fff" stroke="#bbb" strokeWidth="1.400" /><path d="M15 12.500V15h2" stroke="#bbb" /></Svg></IconButton>
            <IconButton $w={18} $dim aria-label="Date list"><Down c="#aaa" /></IconButton>
          </Strip>
        </Group>

        <Group w={391} label="Style" launch row>
          <BigButton $w={86} $top={10}>
            <Svg w={36} h={36}>
              <rect x="2" y="2" width="29" height="24" fill="#fff" stroke="#666" strokeWidth="1.500" />
              <path d="M5 14l4-9 4 9M6.500 11h5" stroke="#555" strokeWidth="1.700" /><path d="M16 7h12M16 10h12M16 13h12M5 17h20M5 20h14M5 23h12" stroke="#8a8a8a" strokeWidth="1.200" />
              <path d="M34 13c1 5-3 9-6 12l-3-3c2-4 5-7 9-9z" fill="#666" /><path d="M25 22l3 3c0 6-7 8-15 7 4-1 5-9 12-10z" fill="#4383bf" /><path d="M18 29l4-2" stroke="#fff" />
            </Svg>
            Conditions
          </BigButton>
          <BigButton $w={49} $top={10}>
            <Svg w={38} h={36}><path d="M36 1c2 2 1 4-1 6l-5 5-5-5 6-5c2-2 3-2 5-1z" fill="#4383bf" /><path d="M18 11c3-4 6-5 8-3l4 4c3 3 1 6-2 8z" fill="#6d6d6d" /><path d="M18 11L1 13c4 9 9 15 17 19 5-2 8-6 9-12z" fill="#efc47a" /></Svg>
            Copy<br />Style
          </BigButton>
          <BigButton $w={74} $top={10}>
            <Svg w={36} h={36}><path d="M2 22L10 3h2l7 17M5 15h11" stroke="#4383bf" strokeWidth="3.200" /><path d="M12 33l10-20h2l9 20M16 26h14" stroke="#555" strokeWidth="3.200" /></Svg>
            Style<br />Designer
          </BigButton>
          <StyleRule />
          <StyleList><StyleItem>[None]</StyleItem></StyleList>
          <StyleScroll>
            <StyleStep aria-label="Previous styles"><Up c="#aaa" w={6} /></StyleStep>
            <StyleStep $push aria-label="Next styles"><Down c="#aaa" w={6} /></StyleStep>
            <StyleStep $dark aria-label="All styles"><Svg w={8} h={9}><path d="M1 1h6" stroke="#111" strokeWidth="1.500" /><path d="M0 4h8L4 8.500z" fill="#111" /></Svg></StyleStep>
          </StyleScroll>
        </Group>
      </Ribbon>

      <Work>
        <ToolBox>
          {tools.map((icon, i) => (
            <React.Fragment key={i}>
              <ToolButton $h={22} aria-label={toolNames[i]}>{icon}</ToolButton>
              <ToolButton $h={19} aria-label={`${toolNames[i]} list`}><Right /></ToolButton>
            </React.Fragment>
          ))}
          <ToolRule />
          {bands.map((icon, i) => <ToolButton key={i} $h={29} aria-label={bandNames[i]}>{icon}</ToolButton>)}
          <ToolRule />
          <ToolButton $h={31} aria-label="Toolbox setup">
            <Svg w={20} h={20}><path d="M2 1l3 3-1 2-3-1c-1 3 2 5 5 4l9 9 3-3-9-9c1-3-2-6-7-5z" fill="#777" /><path d="M3 18l10-11" stroke="#777" strokeWidth="3" /><path d="M9 3c3-3 7-2 10 1v4l-2 1-2-3-2 2z" fill={B} /></Svg>
          </ToolButton>
        </ToolBox>

        <Document>
          <DocTabs>
            <DocTab $on $gap={11}><PaperIcon />Page1</DocTab>
            <DocTab $gap={8}><PreviewIcon />Preview</DocTab>
            <DocTab $gap={8}><GlobeIcon />HTML Preview</DocTab>
          </DocTabs>
          <Surface>
            <VRuler>
              <VCursor />
              {Array.from({ length: 12 }, (_, i) => <VMark key={i} $y={19 + at(i)}>{i + 4}</VMark>)}
              {Array.from({ length: 11 }, (_, i) => <VTick key={i} $y={19 + at(i + 0.5)} />)}
            </VRuler>
            <Stage>
              <HRuler>
                {Array.from({ length: 8 }, (_, i) => <HMark key={i} $x={at(i)}>{i}</HMark>)}
                {Array.from({ length: 8 }, (_, i) => <HTick key={i} $x={at(i + 0.5)} />)}
              </HRuler>
              <Canvas>
                <Sheet>
                  <Bands>
                    <BandBody $h={244} $bg="#f0f3fa" $line="#8f9bb5" />
                    <BandGap />
                    <BandTitle $bg="#6d9fd6">DataBand1; Data Source: partidas</BandTitle>
                    <BandBody $h={120} $bg="#e0f1f8" $line="#5f93bf" />
                    <BandGap />
                    <BandTitle $bg="#bccbe4">FooterBand1</BandTitle>
                    <BandBody $h={400} $bg="#f0f4fb" $line="#8f9bb5" />
                    <GridLines />
                    {fields.map((f, i) => (
                      <Field key={i} $x={f.x} $y={f.y} $w={f.w} $h={f.h || 27} $s={f.s || 16} $b={f.b} $a={f.a} $t={f.p} $side={f.side || 3}>{f.t}</Field>
                    ))}
                    <Panel>Panel1</Panel>
                    <Rule $y={203} />
                    <Rule $y={230} />
                    <Rule $y={482} />
                  </Bands>
                </Sheet>
              </Canvas>
            </Stage>
            <ScrollTrack>
              <Up c="#aaa" w={9} />
              <ScrollThumb />
              <Down c="#aaa" w={9} />
            </ScrollTrack>
          </Surface>
        </Document>

        <Side>
          <SideFrame>
            <SideHead>
              <h2>Properties</h2>
              <HeadButton aria-label="Pin"><Svg w={10} h={12}><path d="M2.500 1v6M7.500 1v6M2 1h6M0 7h10M5 7v5" stroke="#888" strokeWidth="1.300" /></Svg></HeadButton>
              <HeadButton aria-label="Close panel"><Svg w={10} h={10}><path d="M1 1l8 8M9 1L1 9" stroke="#888" strokeWidth="1.600" /></Svg></HeadButton>
            </SideHead>
            <PickRow>
              <PickBox><select aria-label="Component"><option>Page1 : Page</option></select><PickArrow><Down w={9} /></PickArrow></PickBox>
              <SortButton aria-label="Sort"><AZ /></SortButton>
            </PickRow>
            <GridTools>
              <GridTool $on aria-label="Categories">
                <Svg w={22} h={22}><rect x="1" y="1" width="8" height="8" rx="2" fill="#dce6f4" stroke="#8a9db5" /><rect x="1" y="12" width="8" height="8" rx="2" fill="#dce6f4" stroke="#8a9db5" /><path d="M3 5h4M5 3v4M3 16h4M5 14v4" stroke="#10305c" strokeWidth="1.600" /><path d="M11 2h4M17 2h4M11 5.500h4M17 5.500h4M11 9h4M17 9h4M11 14h4M17 14h4M11 19h4M17 19h4" stroke="#777" strokeWidth="1.300" /></Svg>
              </GridTool>
              <GridTool aria-label="Alphabetical"><AZ z="#b03a3a" a="#3f6fb0" arrow="#111" /></GridTool>
              <GridToolRule />
              <GridTool $on aria-label="Property list"><Svg w={16} h={16}><rect x=".8" y="1.800" width="14.400" height="13" fill="#fff" stroke="#888" strokeWidth="1.400" /><path d="M3 5h2M6 5h7M3 8h2M6 8h7M3 11h2M6 11h7" stroke="#6fa0d6" strokeWidth="1.500" /></Svg></GridTool>
              <GridTool aria-label="Events"><Svg w={14} h={18}><path d="M6 0h7L9 6h4L2 18l3-8H1z" fill="#f5bd5c" /></Svg></GridTool>
              <GridToolRule />
              <GridTool aria-label="Property pages"><Svg w={20} h={18}><rect x=".5" y=".5" width="19" height="17" fill="#c9c9c9" stroke="#aaa" /><path d="M2 3h16" stroke="#999" strokeWidth="2" /><rect x="3.500" y="6.500" width="13" height="8" fill="#e8e8e8" stroke="#999" /><path d="M6 9h8M6 12h3" stroke="#999" /></Svg></GridTool>
            </GridTools>
            <GridFrame>
              <GridView>
                <PropTable>
                  <colgroup><col style={{ width: 26 }} /><col style={{ width: 129 }} /><col /></colgroup>
                  <tbody>
                    {rows.map(([name, value, bold, extra = ""]) =>
                      value === undefined ? (
                        <tr key={name}><Gutter><Chevron open /></Gutter><SectionCell colSpan={2}>{name}</SectionCell></tr>
                      ) : (
                        <tr key={name}>
                          <Gutter>{extra.includes("more") && <Chevron />}</Gutter>
                          <NameCell $sel={extra === "sel"}>{name}</NameCell>
                          <ValueCell $b={!!bold}>{extra.includes("swatch") && <Swatch />}{value}</ValueCell>
                        </tr>
                      )
                    )}
                  </tbody>
                </PropTable>
              </GridView>
              <GridScroll>
                <BevelButton aria-label="Scroll up"><Up c="#000" w={9} /></BevelButton>
                <BevelThumb />
                <BevelButton aria-label="Scroll down"><Down c="#000" w={9} /></BevelButton>
              </GridScroll>
            </GridFrame>
            <HelpBox><b>(Name)</b><p>Component name.</p></HelpBox>
          </SideFrame>
          <SideTabs>
            <SideTab $on $w={104}>
              <Svg w={20} h={20}><path d="M5 7l5-5 8 2v6l-6 2z" fill="#e0b24a" stroke="#a8863a" /><path d="M17 1h3v9h-3z" fill="#6b9a5f" /><rect x="1" y="9" width="16" height="10" fill="#fff" stroke="#888" /><path d="M3 12h5M3 14.500h5M3 17h5M10 12h5M10 14.500h5M10 17h5" stroke="#8aa4c4" /></Svg>
              Properties
            </SideTab>
            <SideTab $w={103}>
              <Svg w={18} h={17}><rect x="6.500" y="1.500" width="9" height="10" fill="#fff" stroke="#777" /><path d="M6 1h10v4H6z" fill={B} /><rect x=".5" y="5.500" width="10" height="10" fill="#fff" stroke="#777" /><path d="M0 5h11v4H0z" fill={B} /><path d="M4 9v6M7.500 9v6M1 12h9" stroke="#9fc0e3" /></Svg>
              Dictionary
            </SideTab>
            <SideTab $w={120}>
              <Svg w={18} h={18}><rect x=".7" y=".7" width="16.600" height="16.600" fill="#fff" stroke="#888" strokeWidth="1.400" /><path d="M5 4v10h4M5 9h4" stroke={B} strokeWidth="1.400" /><path d="M3 4h5M10 4h4M9 9h5M9 14h5" stroke={B} strokeWidth="2.200" /></Svg>
              Report Tree
            </SideTab>
          </SideTabs>
        </Side>
      </Work>

      <Status>
        <StatusButton $w={106} $gap={14}>Centimeters<Up w={6} /></StatusButton>
        <StatusRule $gap={12} />
        <StatusButton $w={132} $gap={12}><Svg w={8} h={14}><path d="M0 0v14l8-7z" fill="#fff" /></Svg>Report Checker</StatusButton>
        <StatusRule $gap={9} />
        <StatusText $w={50}>Page1</StatusText>
        <StatusRule $gap={5} />
        <StatusText $w={110}>X:2.53  Y:6.80</StatusText>
        <ZoomArea>
          <StatusRule $gap={8} />
          <StatusButton $w={29} aria-label="Page width"><Svg w={20} h={18}><path d="M1 1h18v16H1z" fill="#e9f0fa" /><path d="M4 4h12M4 14h12" stroke={B} strokeWidth="2" /><path d="M5 9h10M6 6v6L2 9zM14 6v6l4-3z" stroke={B} fill={B} /></Svg></StatusButton>
          <StatusButton $w={28} aria-label="Page height"><Svg w={18} h={18}><path d="M1 1h16v16H1z" fill="#e9f0fa" /><path d="M3 7h12M3 9h12M3 11h12" stroke={B} strokeWidth="1" /><path d="M6 5l3-3 3 3zM6 13l3 3 3-3z" fill={B} /></Svg></StatusButton>
          <StatusButton $w={27} aria-label="Whole page"><Svg w={18} h={18}><path d="M1 1h16v16H1z" fill="#e9f0fa" /><path d="M4.500 3.500h9v11h-9zM6 6h6M6 8.500h6M6 11h6" stroke={B} strokeWidth="1.200" /></Svg></StatusButton>
          <StatusButton $w={33} aria-label="Zoom 100"><Svg w={20} h={20}><path d="M1 1h9l4 4v6H6v6H1z" fill="#e9f0fa" /><path d="M3 5h7M3 8h9M3 11h3" stroke={B} /><path d="M13 1h5v9" stroke="#8fa9d2" strokeDasharray="1 1" /><rect x="5" y="12" width="15" height="8" fill="#3f86c6" /><path d="M7 13.500v5M9.500 13.500h3v5h-3zM15 13.500h3v5h-3z" stroke="#fff" strokeWidth="1.200" /></Svg></StatusButton>
          <StatusText $w={50}>135%</StatusText>
          <PlainButton aria-label="Zoom out"><Svg w={12} h={12}><path d="M1 6h10" stroke="#fff" strokeWidth="2.600" /></Svg></PlainButton>
          <ZoomSlider type="range" aria-label="Zoom" min={0} max={100} defaultValue={55} />
          <PlainButton aria-label="Zoom in"><Svg w={12} h={12}><path d="M1 6h10M6 1v10" stroke="#fff" strokeWidth="2.400" /></Svg></PlainButton>
        </ZoomArea>
      </Status>
    </App_>
  );
}
